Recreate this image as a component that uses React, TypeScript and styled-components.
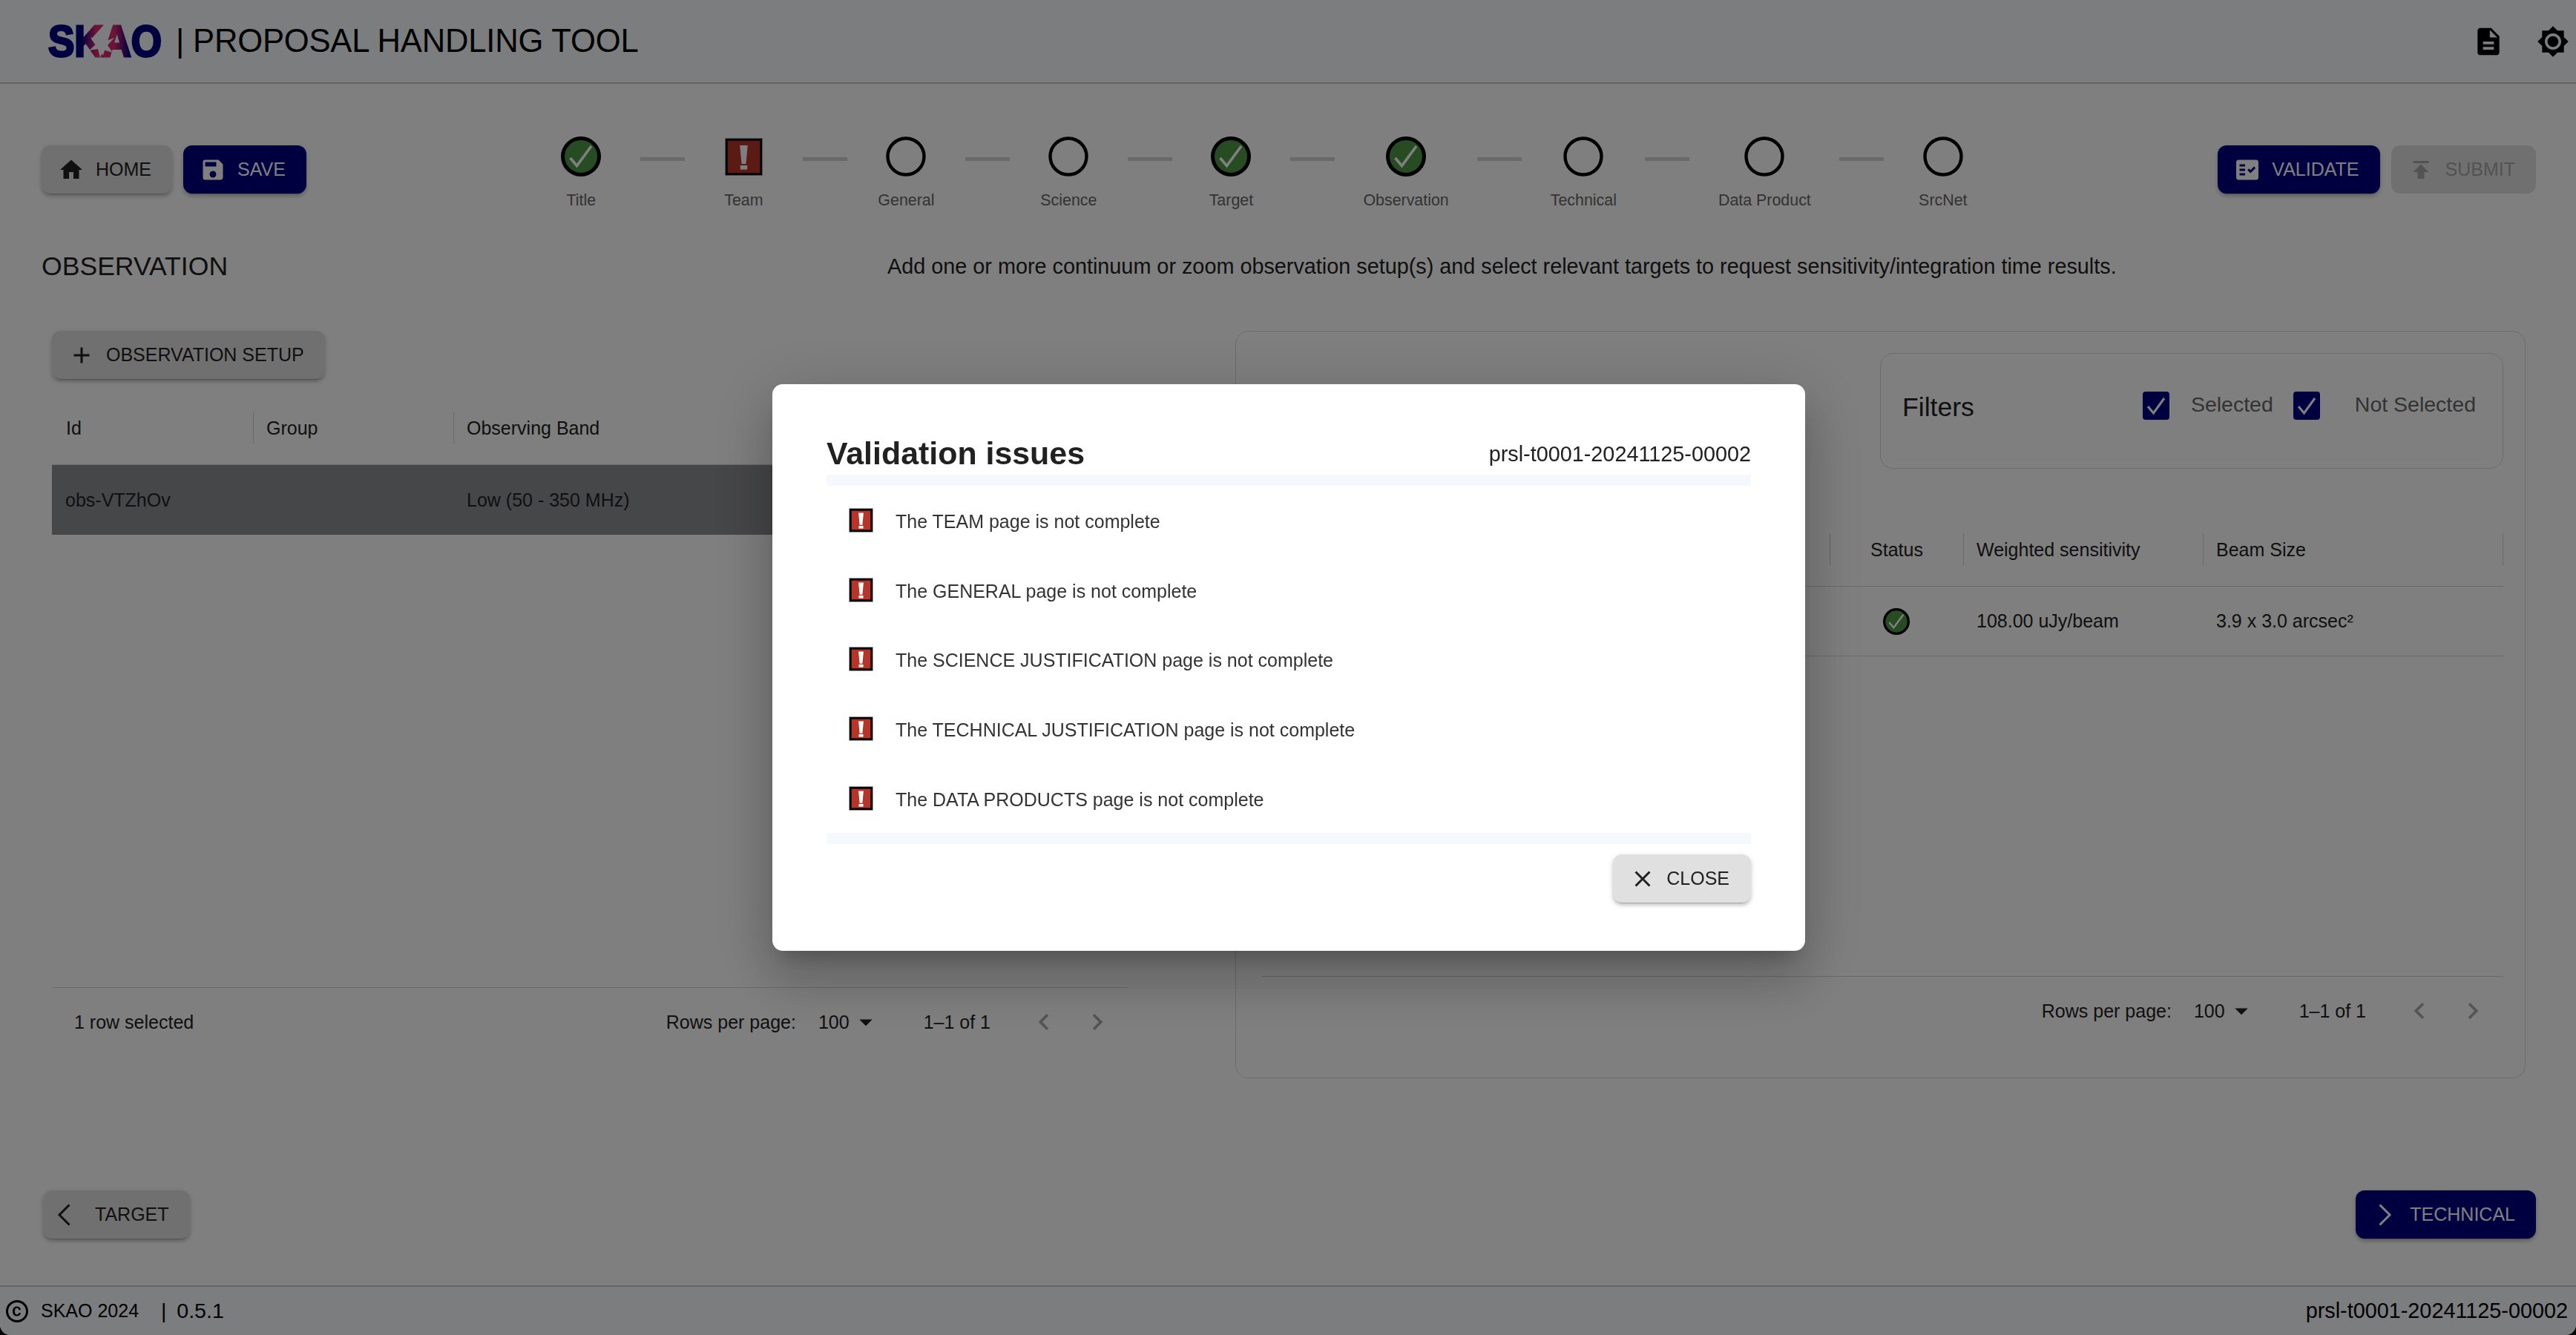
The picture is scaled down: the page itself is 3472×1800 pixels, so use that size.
import React from 'react';
import styled, { createGlobalStyle } from 'styled-components';
import {
  MdHome,
  MdSave,
  MdDescription,
  MdBrightness7,
  MdFactCheck,
  MdPublish,
  MdAdd,
  MdClose,
  MdCopyright,
  MdChevronLeft,
  MdChevronRight,
  MdArrowDropDown,
} from 'react-icons/md';

const NAVY = '#000080';
const INK = '#212121';

const GlobalStyle = createGlobalStyle`
  html, body {
    margin: 0;
    padding: 0;
    background: #000;
  }
  body {
    font-family: "Liberation Sans", Arial, sans-serif;
    color: ${INK};
  }
  * {
    box-sizing: border-box;
  }
`;

const Page = styled.div`
  width: 3472px;
  height: 1800px;
  display: flex;
  flex-direction: column;
  overflow: hidden;
  background: #fff;
  border-radius: 0 0 14px 14px;
`;

const Header = styled.header`
  height: 113px;
  flex: none;
  background: #f8fafe;
  border-bottom: 2px solid #cbcbcb;
  display: flex;
  align-items: center;
  padding: 0 9px 0 62px;
`;

const LogoText = styled.text`
  font-family: "Liberation Sans", Arial, sans-serif;
  font-weight: 700;
  font-size: 60px;
`;

const AppTitle = styled.div`
  font-size: 43.6px;
  color: #000;
  margin-left: -5px;
  letter-spacing: -0.2px;
  white-space: nowrap;
`;

const HeaderIcons = styled.div`
  margin-left: auto;
  display: flex;
  align-items: center;
  gap: 43px;
  color: #000;
  font-size: 44px;

  svg {
    display: block;
  }
`;

const Main = styled.main`
  flex: 1;
  display: flex;
  flex-direction: column;
  min-height: 0;
`;

const NavRow = styled.div`
  height: 201px;
  padding: 71px 54px 0 56px;
  display: flex;
  justify-content: space-between;
  align-items: flex-start;
`;

const ButtonGroup = styled.div`
  display: flex;
  gap: 15px;
  margin-top: 12px;
`;

const Button = styled.button<{ $variant?: 'primary' | 'secondary' | 'disabled' }>`
  height: 65px;
  padding: 0 28px 0 22px;
  border: none;
  border-radius: 12px;
  display: inline-flex;
  align-items: center;
  gap: 15px;
  font-family: inherit;
  font-size: 25px;
  text-transform: uppercase;
  white-space: nowrap;
  background: ${({ $variant }) => ($variant === 'primary' ? NAVY : '#e0e0e0')};
  color: ${({ $variant }) =>
    $variant === 'primary' ? '#fff' : $variant === 'disabled' ? '#a6a6a6' : INK};
  box-shadow: ${({ $variant }) =>
    $variant === 'disabled'
      ? 'none'
      : '0 3px 1px -2px rgba(0,0,0,.2), 0 4px 4px 0 rgba(0,0,0,.14), 0 2px 9px 0 rgba(0,0,0,.12)'};

  svg {
    font-size: 36px;
    flex: none;
  }
`;

const BackButton = styled(Button)`
  padding-left: 19px;
  gap: 32px;
`;

const NextButton = styled(Button)`
  padding-left: 30px;
  gap: 24px;
`;

const Stepper = styled.div`
  display: flex;
  align-items: flex-start;
`;

const Step = styled.div`
  min-width: 82px;
  display: flex;
  flex-direction: column;
  align-items: center;
`;

const StepIcon = styled.div`
  height: 54px;
  display: flex;
  align-items: center;
  justify-content: center;
`;

const StepLabel = styled.div`
  margin-top: 17px;
  font-size: 21.4px;
  line-height: 30px;
  color: #666;
  white-space: nowrap;
`;

const Connector = styled.div`
  width: 60px;
  height: 5px;
  margin: 28px 38.5px 0;
  background: #d2d2d2;
`;

const IntroRow = styled.div`
  height: 90px;
  display: flex;
  align-items: center;
  padding-left: 56px;
`;

const Heading = styled.h2`
  margin: 0;
  width: 1140px;
  font-size: 35.6px;
  font-weight: 400;
`;

const Description = styled.p`
  margin: 0;
  font-size: 28.8px;
  white-space: nowrap;
`;

const Content = styled.div`
  margin-top: 42px;
  height: 1008px;
  padding-left: 70px;
  display: grid;
  grid-template-columns: 1450px 1739px;
  column-gap: 145px;
`;

const LeftPanel = styled.section`
  display: flex;
  flex-direction: column;
`;

const SetupBar = styled.div`
  height: 109px;
`;

const RightPanel = styled.section`
  border: 1px solid #d8d8d8;
  border-radius: 18px;
  padding: 29px 29px 0 34px;
  display: flex;
  flex-direction: column;
`;

const TableHead = styled.div<{ $columns: string }>`
  height: 72px;
  display: grid;
  grid-template-columns: ${({ $columns }) => $columns};
  border-bottom: 1px solid #d4d4d4;
`;

const HeadCell = styled.div<{ $end?: boolean; $center?: boolean }>`
  height: 43px;
  padding: 2px 0 0 ${({ $center }) => ($center ? 0 : '17px')};
  display: flex;
  align-items: center;
  justify-content: ${({ $center }) => ($center ? 'center' : 'flex-start')};
  font-size: 25px;
  border-left: 1px solid #d4d4d4;
  border-right: ${({ $end }) => ($end ? '1px solid #d4d4d4' : 'none')};
  white-space: nowrap;
`;

const FirstHeadCell = styled(HeadCell)`
  border-left: none;
  padding-left: 19px;
`;

const Row = styled.div<{ $columns: string; $selected?: boolean }>`
  height: 94px;
  display: grid;
  grid-template-columns: ${({ $columns }) => $columns};
  align-items: center;
  font-size: 25px;
  background: ${({ $selected }) => ($selected ? '#8d8e92' : 'transparent')};
  border-bottom: ${({ $selected }) => ($selected ? 'none' : '1px solid #d4d4d4')};
`;

const Cell = styled.div<{ $center?: boolean }>`
  padding-left: ${({ $center }) => ($center ? 0 : '18px')};
  display: flex;
  justify-content: ${({ $center }) => ($center ? 'center' : 'flex-start')};
  white-space: nowrap;
`;

const TableBody = styled.div<{ $height: number }>`
  height: ${({ $height }) => $height}px;
  border-bottom: 1px solid #d4d4d4;
`;

const Pagination = styled.div`
  height: 90px;
  padding-top: 2px;
  display: flex;
  align-items: center;
  font-size: 25px;
  white-space: nowrap;
`;

const RowCount = styled.div`
  margin-left: 30px;
`;

const PageControls = styled.div`
  margin-left: auto;
  display: flex;
  align-items: center;
  padding-right: 5px;
`;

const PageSize = styled.div`
  margin-left: 30px;
  display: flex;
  align-items: center;

  svg {
    font-size: 42px;
    margin-left: 1px;
  }
`;

const PageRange = styled.div`
  margin-left: 57px;
  margin-right: 36px;
`;

const PageArrow = styled.div`
  width: 72px;
  display: flex;
  justify-content: center;
  color: #a8a8a8;
  font-size: 44px;

  svg {
    display: block;
  }
`;

const FiltersBox = styled.div`
  align-self: flex-end;
  width: 840px;
  height: 156px;
  border: 1px solid #d8d8d8;
  border-radius: 18px;
  padding: 51px 36px 0 29px;
  display: flex;
  align-items: flex-start;
`;

const FiltersTitle = styled.div`
  font-size: 35.6px;
  line-height: 42px;
  margin-right: auto;
`;

const FilterBox = styled.span`
  width: 36px;
  height: 38px;
  display: block;
  flex: none;
`;

const FilterLabel = styled.span<{ $before: number; $after: number }>`
  margin-left: ${({ $before }) => $before}px;
  margin-right: ${({ $after }) => $after}px;
  font-size: 28.5px;
  line-height: 34px;
  color: #666;
  white-space: nowrap;
`;

const ResultsTable = styled.div`
  margin-top: 87px;
`;

const BottomRow = styled.div`
  margin-top: 151px;
  padding: 0 54px 0 58px;
  display: flex;
  justify-content: space-between;
`;

const Footer = styled.footer`
  height: 67px;
  margin-top: auto;
  flex: none;
  background: #f8fafe;
  border-top: 2px solid #cbcbcb;
  display: flex;
  align-items: center;
  padding: 0 11px 0 5px;
  color: #000;
`;

const FooterCopy = styled.div`
  display: flex;
  align-items: center;
  font-size: 25px;

  svg {
    font-size: 36px;
    margin-right: 14px;
  }
`;

const FooterVersion = styled.span`
  margin-left: 30px;
  font-size: 28.5px;
  word-spacing: 6px;
`;

const FooterId = styled.div`
  margin-left: auto;
  font-size: 28.8px;
`;

const Backdrop = styled.div`
  position: fixed;
  inset: 0;
  z-index: 10;
  background: rgba(0, 0, 0, 0.5);
  display: flex;
  align-items: center;
  justify-content: center;
`;

const Dialog = styled.div`
  width: 1392px;
  height: 764px;
  margin-left: 2px;
  padding: 0 73px;
  background: #fff;
  border-radius: 14px;
  box-shadow: 0 20px 26px -12px rgba(0,0,0,.2), 0 42px 68px 6px rgba(0,0,0,.14), 0 16px 82px 16px rgba(0,0,0,.12);
  display: flex;
  flex-direction: column;
`;

const DialogHeader = styled.div`
  height: 122px;
  padding-top: 63px;
  display: flex;
  justify-content: space-between;
  align-items: center;
`;

const DialogTitle = styled.h2`
  margin: 0;
  font-size: 42.9px;
  line-height: 56px;
  font-weight: 700;
`;

const DialogId = styled.div`
  padding-top: 3px;
  font-size: 28.8px;
`;

const Band = styled.div`
  height: 15px;
  flex: none;
  background: #f5f8fc;
`;

const IssueList = styled.div`
  flex: none;
  height: 468px;
  padding-left: 30px;
  display: grid;
  grid-auto-rows: 1fr;
`;

const Issue = styled.div`
  display: flex;
  align-items: center;
  gap: 30px;
  font-size: 25px;
  color: #333;
`;

const IssueText = styled.span`
  padding-top: 4px;
`;

const DialogActions = styled.div`
  margin-top: 14px;
  display: flex;
  justify-content: flex-end;
`;

const CloseButton = styled(Button)`
  padding: 0 29px 0 22px;
  gap: 14px;
`;

// black frame keeps the same stroke at both sizes, the sign scales
const ErrorIcon = ({ size }: { size: number }) => {
  const unit = 51 / size;
  const edge = 0.8 * unit;
  const inner = edge + 2.9 * unit;
  return (
    <svg width={size} height={size} viewBox="0 0 51 51" style={{ display: 'block' }}>
      <rect width="51" height="51" fill="#c8c8c8" />
      <rect x={edge} y={edge} width={51 - 2 * edge} height={51 - 2 * edge} fill="#000" />
      <rect x={inner} y={inner} width={51 - 2 * inner} height={51 - 2 * inner} fill="#b63428" />
      <path d="M20.2 10h10.6l-2.4 25h-5.8z" fill="#fff" />
      <rect x="20.8" y="37" width="9.4" height="5.6" fill="#fff" />
    </svg>
  );
};

const StatusIcon = ({ size }: { size: number }) => (
  <svg width={size} height={size} viewBox="0 0 54 54" style={{ display: 'block' }}>
    <circle cx="27" cy="27" r="24.5" fill="#4f9746" stroke="#000" strokeWidth="5" />
    <path d="M12.5 29l9 10.5L41 13" fill="none" stroke="#fff" strokeWidth="3.6" />
  </svg>
);

const EmptyIcon = () => (
  <svg width={54} height={54} viewBox="0 0 54 54" style={{ display: 'block' }}>
    <circle cx="27" cy="27" r="24.5" fill="none" stroke="#000" strokeWidth="4.4" />
  </svg>
);

const CheckedBox = () => (
  <FilterBox>
    <svg width={36} height={38} viewBox="0 0 36 38" style={{ display: 'block' }}>
      <rect width="36" height="38" rx="4" fill={NAVY} />
      <path d="M7 20l7.5 9L29 9" fill="none" stroke="#fff" strokeWidth="3" />
    </svg>
  </FilterBox>
);

const Chevron = ({ dir }: { dir: 'left' | 'right' }) => (
  <svg width={19} height={30} viewBox="0 0 19 30" style={{ display: 'block' }}>
    <path
      d={dir === 'left' ? 'M16.5 1.5 3 15l13.5 13.5' : 'M2.5 1.5 16 15 2.5 28.5'}
      fill="none"
      stroke="currentColor"
      strokeWidth="3"
    />
  </svg>
);

const SkaoLogo = () => (
  <svg width={180} height={70} viewBox="0 0 180 70" style={{ display: 'block' }}>
    <defs>
      <linearGradient id="skaoFill" x1="0" y1="0" x2="160" y2="0" gradientUnits="userSpaceOnUse">
        <stop offset="0.3" stopColor="#000080" />
        <stop offset="0.42" stopColor="#d6286e" />
        <stop offset="0.58" stopColor="#d6286e" />
        <stop offset="0.7" stopColor="#000080" />
      </linearGradient>
    </defs>
    <LogoText
      x="3"
      y="55"
      fill="url(#skaoFill)"
      stroke="url(#skaoFill)"
      strokeWidth="3"
      textLength="153"
      lengthAdjust="spacingAndGlyphs"
    >
      SKAO
    </LogoText>
    <path
      d="M75 24l4 11 13-5-9 10 7 10-13-4-4 11-3-12-12 2 9-8-7-10 12 5z"
      fill="#f8fafe"
    />
  </svg>
);

type StepState = 'done' | 'error' | 'empty';

const steps: { label: string; state: StepState }[] = [
  { label: 'Title', state: 'done' },
  { label: 'Team', state: 'error' },
  { label: 'General', state: 'empty' },
  { label: 'Science', state: 'empty' },
  { label: 'Target', state: 'done' },
  { label: 'Observation', state: 'done' },
  { label: 'Technical', state: 'empty' },
  { label: 'Data Product', state: 'empty' },
  { label: 'SrcNet', state: 'empty' },
];

const issues = [
  'The TEAM page is not complete',
  'The GENERAL page is not complete',
  'The SCIENCE JUSTIFICATION page is not complete',
  'The TECHNICAL JUSTIFICATION page is not complete',
  'The DATA PRODUCTS page is not complete',
];

const LEFT_COLUMNS = '271px 270px 1fr';
const RIGHT_COLUMNS = '1fr 180px 323px 405px';

const PageFooter = () => (
  <PageControls>
    Rows per page:
    <PageSize>
      100
      <MdArrowDropDown />
    </PageSize>
    <PageRange>1–1 of 1</PageRange>
    <PageArrow>
      <MdChevronLeft />
    </PageArrow>
    <PageArrow>
      <MdChevronRight />
    </PageArrow>
  </PageControls>
);

const App: React.FC = () => {
  return (
    <Page>
      <GlobalStyle />
      <Header>
        <SkaoLogo />
        <AppTitle>| PROPOSAL HANDLING TOOL</AppTitle>
        <HeaderIcons>
          <MdDescription />
          <MdBrightness7 />
        </HeaderIcons>
      </Header>

      <Main>
        <NavRow>
          <ButtonGroup>
            <Button>
              <MdHome />
              Home
            </Button>
            <Button $variant="primary">
              <MdSave />
              Save
            </Button>
          </ButtonGroup>

          <Stepper>
            {steps.map((step, index) => (
              <React.Fragment key={step.label}>
                {index > 0 && <Connector />}
                <Step>
                  <StepIcon>
                    {step.state === 'done' && <StatusIcon size={54} />}
                    {step.state === 'error' && <ErrorIcon size={51} />}
                    {step.state === 'empty' && <EmptyIcon />}
                  </StepIcon>
                  <StepLabel>{step.label}</StepLabel>
                </Step>
              </React.Fragment>
            ))}
          </Stepper>

          <ButtonGroup>
            <Button $variant="primary">
              <MdFactCheck />
              Validate
            </Button>
            <Button $variant="disabled">
              <MdPublish />
              Submit
            </Button>
          </ButtonGroup>
        </NavRow>

        <IntroRow>
          <Heading>OBSERVATION</Heading>
          <Description>
            Add one or more continuum or zoom observation setup(s) and select relevant targets to
            request sensitivity/integration time results.
          </Description>
        </IntroRow>

        <Content>
          <LeftPanel>
            <SetupBar>
              <Button>
                <MdAdd />
                Observation Setup
              </Button>
            </SetupBar>
            <TableHead $columns={LEFT_COLUMNS}>
              <FirstHeadCell>Id</FirstHeadCell>
              <HeadCell>Group</HeadCell>
              <HeadCell>Observing Band</HeadCell>
            </TableHead>
            <Row $columns={LEFT_COLUMNS} $selected>
              <Cell>obs-VTZhOv</Cell>
              <Cell />
              <Cell>Low (50 - 350 MHz)</Cell>
            </Row>
            <TableBody $height={611} />
            <Pagination>
              <RowCount>1 row selected</RowCount>
              <PageFooter />
            </Pagination>
          </LeftPanel>

          <RightPanel>
            <FiltersBox>
              <FiltersTitle>Filters</FiltersTitle>
              <CheckedBox />
              <FilterLabel $before={29} $after={27}>Selected</FilterLabel>
              <CheckedBox />
              <FilterLabel $before={47} $after={0}>Not Selected</FilterLabel>
            </FiltersBox>
            <ResultsTable>
              <TableHead $columns={RIGHT_COLUMNS}>
                <FirstHeadCell />
                <HeadCell $center>Status</HeadCell>
                <HeadCell>Weighted sensitivity</HeadCell>
                <HeadCell $end>Beam Size</HeadCell>
              </TableHead>
              <Row $columns={RIGHT_COLUMNS}>
                <Cell />
                <Cell $center>
                  <StatusIcon size={36} />
                </Cell>
                <Cell>108.00 uJy/beam</Cell>
                <Cell>3.9 x 3.0 arcsec²</Cell>
              </Row>
              <TableBody $height={432} />
              <Pagination>
                <PageFooter />
              </Pagination>
            </ResultsTable>
          </RightPanel>
        </Content>

        <BottomRow>
          <BackButton>
            <Chevron dir="left" />
            Target
          </BackButton>
          <NextButton $variant="primary">
            <Chevron dir="right" />
            Technical
          </NextButton>
        </BottomRow>
      </Main>

      <Footer>
        <FooterCopy>
          <MdCopyright />
          SKAO 2024
          <FooterVersion>| 0.5.1</FooterVersion>
        </FooterCopy>
        <FooterId>prsl-t0001-20241125-00002</FooterId>
      </Footer>

      <Backdrop>
        <Dialog>
          <DialogHeader>
            <DialogTitle>Validation issues</DialogTitle>
            <DialogId>prsl-t0001-20241125-00002</DialogId>
          </DialogHeader>
          <Band />
          <IssueList>
            {issues.map(issue => (
              <Issue key={issue}>
                <ErrorIcon size={33} />
                <IssueText>{issue}</IssueText>
              </Issue>
            ))}
          </IssueList>
          <Band />
          <DialogActions>
            <CloseButton>
              <MdClose />
              Close
            </CloseButton>
          </DialogActions>
        </Dialog>
      </Backdrop>
    </Page>
  );
};

export default App;
